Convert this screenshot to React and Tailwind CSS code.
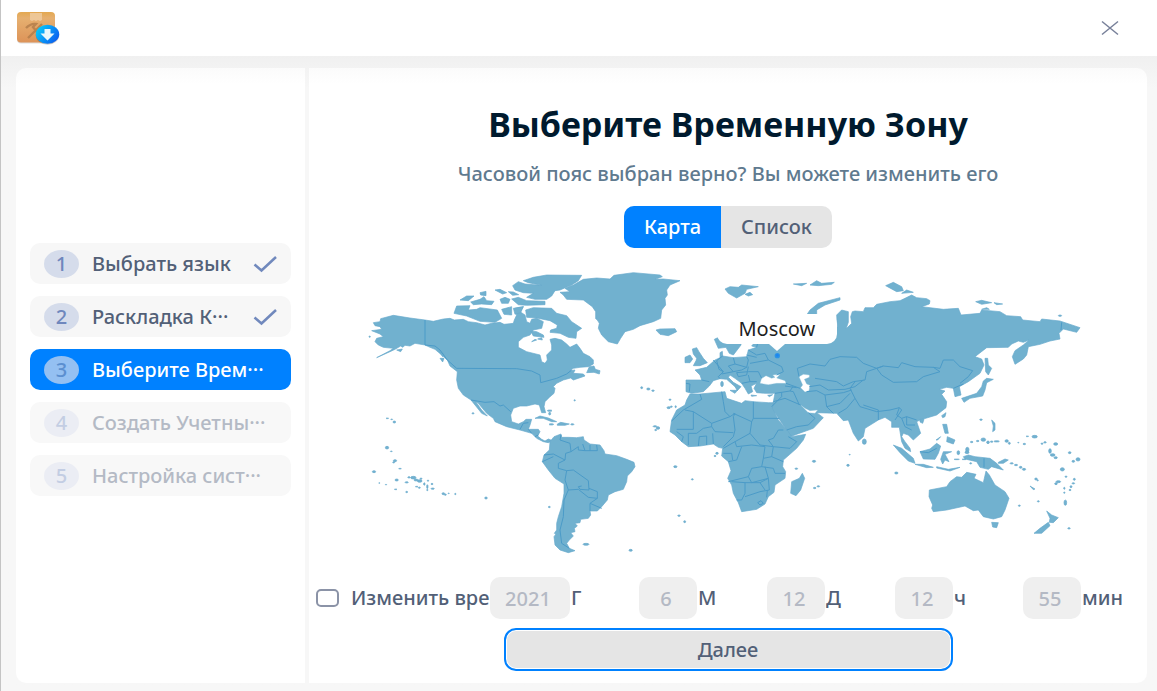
import React, { useState } from 'react';

const steps = [
  { id: 1, label: 'Выбрать язык', status: 'done' },
  { id: 2, label: 'Раскладка К···', status: 'done' },
  { id: 3, label: 'Выберите Врем···', status: 'active' },
  { id: 4, label: 'Создать Учетны···', status: 'pending' },
  { id: 5, label: 'Настройка сист···', status: 'pending' },
];

const dateFields = [
  { id: 'year', value: '2021', unit: 'Г', width: 'w-20' },
  { id: 'month', value: '6', unit: 'М', width: 'w-[58px]' },
  { id: 'day', value: '12', unit: 'Д', width: 'w-[58px]' },
  { id: 'hour', value: '12', unit: 'ч', width: 'w-[58px]' },
  { id: 'minute', value: '55', unit: 'мин', width: 'w-[58px]' },
];

// Small islands: [x, y, rx, ry]
const islands = [
  [82, 475, 4, 1], [95, 478, 3, 1], [103, 486, 4, 3], [81, 563, 5, 4], [94, 574, 3, 1], [105, 602, 5, 3], [101, 607, 3, 2],
  [120, 626, 4, 1], [42, 635, 5, 3], [58, 669, 2, 1], [78, 674, 2, 1], [110, 660, 5, 3], [107, 688, 4, 1], [140, 667, 5, 2],
  [140, 696, 3, 2], [147, 652, 4, 2], [160, 653, 8, 4], [168, 660, 6, 3], [179, 663, 7, 4], [183, 656, 3, 2], [170, 680, 4, 1],
  [178, 683, 3, 2], [193, 672, 2, 4], [202, 680, 2, 6], [204, 662, 2, 2], [216, 672, 3, 2], [218, 686, 5, 2], [202, 690, 2, 2],
  [250, 701, 4, 3], [256, 704, 3, 2], [266, 700, 2, 1], [286, 702, 2, 2], [378, 714, 4, 3], [568, 741, 3, 2],
  [678, 853, 9, 3], [812, 871, 5, 3], [644, 421, 2, 2], [845, 383, 3, 3], [865, 387, 5, 3], [879, 392, 4, 2],
  [885, 499, 6, 2], [894, 504, 5, 4], [887, 510, 3, 2], [930, 419, 3, 2], [926, 443, 5, 3], [934, 440, 3, 2], [947, 440, 2, 3],
  [946, 620, 5, 3], [997, 658, 3, 2], [957, 767, 4, 2], [974, 785, 3, 3], [1071, 580, 4, 3], [1065, 588, 3, 2],
  [1309, 626, 4, 2], [1362, 604, 5, 3], [1464, 616, 4, 3], [1469, 584, 2, 1], [1364, 684, 4, 2], [1375, 679, 4, 2],
  [1609, 639, 5, 3], [569, 452, 7, 2], [569, 461, 3, 4], [574, 493, 7, 2], [637, 493, 5, 2], [339, 460, 3, 2],
  [1863, 479, 4, 2], [1835, 546, 4, 2], [1853, 543, 4, 2], [1870, 539, 7, 5], [1884, 547, 4, 4], [1895, 545, 4, 2],
  [1910, 544, 8, 2], [1940, 543, 5, 4], [1948, 550, 3, 3], [1975, 548, 2, 1], [1993, 552, 4, 2], [2024, 530, 8, 4],
  [2002, 529, 4, 1], [2046, 551, 3, 2], [2055, 547, 4, 2], [2087, 552, 6, 4], [2129, 578, 4, 3], [2140, 604, 4, 3],
  [2154, 598, 6, 5], [2070, 573, 4, 7], [2078, 585, 7, 4], [2087, 593, 5, 3], [2107, 628, 6, 5], [2118, 650, 3, 2],
  [2095, 665, 7, 3], [2088, 671, 4, 3], [2143, 658, 3, 3], [2140, 670, 4, 2], [2133, 680, 3, 3], [2130, 690, 3, 2],
  [2113, 685, 2, 3], [2113, 698, 2, 2], [2116, 728, 4, 8], [2028, 657, 4, 3], [2033, 661, 2, 2], [1978, 737, 3, 2],
  [2035, 724, 3, 2], [2127, 805, 4, 2], [1955, 610, 5, 2], [1968, 615, 5, 2], [1982, 622, 4, 3], [1992, 628, 5, 3],
  [1795, 578, 4, 6], [1832, 610, 3, 2], [1822, 569, 5, 7], [1821, 577, 6, 4], [1790, 598, 8, 1], [1812, 598, 6, 1],
  [2100, 167, 5, 2], [29, 230, 2, 2], [1513, 545, 6, 8], [1086, 372, 4, 8],
];

function AppLogo() {
  return (
    <svg viewBox="0 0 44 35" className="h-[35px] w-11" aria-hidden="true">
      <defs>
        <linearGradient id="box" x1="0" y1="0" x2="0" y2="1">
          <stop offset="0" stopColor="#e3a850" />
          <stop offset="0.2" stopColor="#e6b070" />
          <stop offset="1" stopColor="#dd9358" />
        </linearGradient>
        <linearGradient id="badge" x1="0" y1="0" x2="1" y2="0.6">
          <stop offset="0.1" stopColor="#08cdfb" />
          <stop offset="1" stopColor="#0a62f0" />
        </linearGradient>
      </defs>
      <rect x="1" y="2" width="38" height="30.5" rx="4" fill="#00000022" />
      <rect x="1" y="1" width="38" height="30.5" rx="4" fill="url(#box)" />
      <path d="M14 2h12v7l-2 1-2-1-2 1-2-1-2 1-2-1Z" fill="#efcba0" opacity="0.85" />
      <path d="M10 17q5-5 10-4l-3 3 10 12M12 27l9-9 5-5" fill="none" stroke="#b07c4a" strokeWidth="2.4" opacity="0.8" />
      <ellipse cx="31.5" cy="24.3" rx="11.7" ry="9.5" fill="#00000030" />
      <ellipse cx="31.5" cy="23.3" rx="11.7" ry="9.5" fill="url(#badge)" />
      <path d="M28.5 18h6v4.500h4l-7 7-7-7h4Z" fill="#e9f7fb" />
    </svg>
  );
}

function WorldMap() {
  return (
    <svg viewBox="-6 0 2220 900" className="block h-auto w-full" aria-hidden="true">
      <g fill="#71b1cf" stroke="#66a9cc" strokeWidth="2" strokeLinejoin="round">
        {/* North and Central America */}
        <path d="M40 188 60 185 62 176 100 166 150 174 195 180 220 184 250 177 270 175 283 180 310 178 325 185 350 188 375 195 395 190 420 187 432 193 460 190 463 180 470 165 465 145 490 140 480 155 495 165 500 185 510 190 515 178 530 175 550 185 545 205 520 210 510 225 490 232 475 245 475 262 500 275 540 285 545 305 555 310 562 300 560 285 575 270 575 255 570 238 585 235 605 240 620 252 630 262 650 252 660 265 670 280 690 290 700 300 700 312 685 320 660 322 640 325 628 332 645 330 640 340 670 342 675 348 640 360 632 354 610 360 590 370 580 380 585 385 582 400 570 410 555 425 552 440 557 458 545 458 538 435 525 432 500 438 480 438 460 445 452 465 455 485 475 492 490 485 498 478 515 478 510 495 505 508 535 508 540 515 533 528 545 538 555 543 565 537 578 542 565 548 550 545 530 535 515 520 480 510 440 500 405 485 400 475 380 460 355 430 347 425 365 450 382 468 365 460 345 435 333 420 310 405 295 385 290 360 292 335 270 318 262 300 245 285 225 268 210 262 195 255 165 250 150 258 135 256 128 262 122 258 105 268 90 275 50 293 90 272 100 265 70 262 55 255 45 245 50 235 70 230 60 222 35 212 65 208 60 200 45 197Z" />
        {/* South America */}
        <path d="M570 545 582 530 603 522 605 532 625 532 650 533 670 530 672 540 690 552 720 555 732 572 735 582 770 587 800 598 822 607 825 620 815 635 802 648 800 665 790 688 765 695 745 705 742 720 725 740 712 753 690 753 692 765 685 775 662 778 660 788 645 790 652 798 643 805 645 815 632 818 640 828 628 840 620 850 628 865 645 872 625 878 600 870 585 855 582 830 588 822 583 820 590 810 590 790 595 770 605 740 612 700 612 672 585 655 565 630 547 605 552 585 568 570Z" />
        {/* Greenland */}
        <path d="M600 97 630 95 615 85 640 75 670 58 710 54 750 57 762 46 820 38 900 45 907 50 885 58 910 57 960 62 930 75 920 90 922 105 915 115 917 135 905 150 902 175 880 185 840 197 820 208 795 215 782 235 772 252 745 245 725 225 715 205 718 190 712 180 707 176 707 155 697 140 670 120 620 118 610 105Z" />
        {/* Arctic islands */}
        <path d="M490 62 520 52 560 45 665 46 655 62 635 75 600 90 585 92 575 108 560 118 525 118 500 112 520 100 490 98 465 90 458 77 475 65 495 72 545 76 505 68Z" />
        <path d="M497 150 520 143 575 145 590 160 620 167 635 185 665 205 650 215 648 235 625 232 600 220 570 217 572 210 590 205 592 195 570 182 530 174 500 172Z" />
        <path d="M290 138 330 137 325 150 350 148 360 143 412 150 425 175 405 187 360 184 320 168 282 160Z" />
        <path d="M300 120 320 108 342 108 325 122ZM332 126 360 118 372 110 380 122 402 124 395 134 365 132 340 134ZM360 98 378 94 378 107 362 105ZM405 90 420 88 440 98 428 102ZM445 95 460 96 476 104 458 106ZM420 118 435 112 450 118 445 130 425 130ZM455 117 475 112 500 122 555 124 555 134 500 136 475 134ZM425 148 455 140 455 165 432 163ZM460 145 490 140 482 158 465 163ZM512 213 530 215 550 225 552 232 520 228ZM533 237 545 233 547 240ZM110 270 127 267 122 275ZM238 275 252 283 248 290ZM240 295 252 295 248 306ZM515 245 525 238 530 240ZM680 338 688 320 702 318 706 328 720 332 718 342 702 337Z" />
        {/* Caribbean */}
        <path d="M525 475 540 468 565 474 590 485 575 485 550 475ZM592 492 602 487 628 492 615 496 592 496Z" />
        {/* Eurasia */}
        <path d="M978 360 1025 360 1020 345 1005 330 1040 322 1065 300 1080 293 1080 278 1087 274 1088 288 1120 293 1160 290 1165 270 1190 262 1175 258 1190 240 1300 200 1432 200 1430 165 1445 150 1465 155 1465 187 1458 207 1475 190 1472 170 1477 155 1485 153 1510 155 1515 143 1540 143 1550 133 1590 125 1620 122 1635 115 1655 105 1670 113 1700 116 1710 122 1708 132 1685 140 1750 148 1795 145 1803 165 1860 160 1865 150 1920 155 1940 167 1982 170 1988 180 2040 185 2045 177 2100 183 2160 203 2150 217 2110 207 2097 220 2100 237 2070 243 2040 253 2005 260 2000 285 1990 297 1965 313 1957 290 1965 272 1990 255 2007 240 1990 247 1975 243 1955 252 1945 262 1880 263 1845 290 1865 297 1872 315 1860 340 1825 365 1798 380 1803 405 1785 410 1780 385 1760 382 1737 388 1755 393 1745 403 1760 425 1758 443 1730 465 1680 480 1670 485 1682 520 1660 540 1645 525 1630 520 1625 530 1635 545 1650 565 1652 575 1635 565 1625 545 1618 502 1595 502 1595 485 1575 472 1555 480 1515 505 1510 530 1495 543 1480 520 1465 480 1450 482 1430 460 1370 458 1390 473 1360 505 1290 530 1280 510 1235 445 1240 425 1245 400 1215 400 1190 398 1182 385 1190 370 1173 378 1178 395 1165 402 1155 385 1145 370 1125 355 1110 345 1105 352 1120 367 1143 380 1132 392 1125 380 1100 358 1080 356 1060 362 1048 378 1030 395 995 400 978 395Z" />
        <path d="M1063 238 1090 225 1145 225 1143 255 1120 285 1108 280 1098 262 1075 265Z" />
        {/* Africa */}
        <path d="M990 402 1020 402 1095 395 1100 415 1145 430 1155 422 1180 425 1225 428 1240 428 1237 445 1255 480 1285 515 1295 530 1337 523 1330 540 1310 565 1270 600 1268 620 1277 635 1275 655 1245 675 1242 697 1225 710 1215 732 1190 748 1145 755 1135 728 1120 700 1115 675 1103 655 1113 632 1105 605 1085 588 1088 565 1075 562 1060 552 1020 558 985 560 965 545 945 525 930 515 935 480 950 450 975 435 980 420ZM1295 665 1318 655 1327 640 1334 655 1322 690 1308 707 1292 700Z" />
        {/* British Isles, Iceland, Svalbard */}
        <path d="M997 267 1010 263 1017 275 1030 295 1042 308 1020 317 1000 317 1008 302 1010 295 1000 282ZM975 292 990 285 998 297 990 308 975 308ZM888 210 900 207 945 206 950 215 925 227 900 223ZM1095 87 1110 80 1135 82 1145 75 1195 80 1160 88 1155 100 1130 114 1105 100ZM1155 103 1170 97 1178 104 1165 108ZM1180 166 1205 165 1205 170 1180 170Z" />
        {/* Russian Arctic islands */}
        <path d="M1340 165 1350 150 1375 130 1440 113 1440 120 1395 135 1370 150 1370 168ZM1300 72 1340 70 1325 77ZM1350 75 1370 62 1385 70 1423 67 1415 73 1375 77ZM1577 77 1600 67 1625 80 1630 92 1610 95ZM1625 100 1640 90 1660 97ZM1847 125 1865 121 1895 128 1865 133ZM1902 128 1928 132 1910 134ZM1865 148 1880 143 1888 148Z" />
        {/* Japan, Sakhalin, Taiwan */}
        <path d="M1875 295 1883 295 1885 315 1895 325 1885 345 1877 335ZM1880 355 1900 358 1880 368 1875 390 1868 408 1830 415 1812 427 1805 415 1850 400 1865 380 1870 363ZM1745 467 1758 458 1755 470 1748 473ZM1680 478 1692 478 1688 490 1680 486Z" />
        {/* South-east Asia */}
        <path d="M1600 555 1625 565 1660 595 1665 610 1645 603 1620 578ZM1665 613 1690 613 1720 622 1700 623ZM1680 575 1710 567 1730 550 1742 558 1735 580 1725 598 1690 597ZM1750 575 1775 575 1755 583 1767 605 1755 600 1748 612 1742 598ZM1748 493 1760 493 1765 520 1755 520ZM1762 530 1785 540 1780 552 1760 545ZM1730 620 1765 628 1800 622 1770 633 1730 624ZM1728 540 1742 530 1733 540ZM1810 590 1825 585 1845 590 1890 595 1910 610 1930 630 1895 620 1885 628 1860 622 1850 605 1815 597ZM1915 607 1935 597 1945 600 1930 610 1915 610ZM1895 480 1905 490 1905 510 1898 515 1900 498ZM2010 678 2025 687 2020 689Z" />
        {/* Australia and New Zealand */}
        <path d="M1708 690 1760 680 1770 665 1790 650 1805 652 1820 637 1848 643 1842 655 1870 668 1878 633 1888 645 1905 675 1935 695 1947 715 1935 750 1925 770 1900 777 1870 770 1855 750 1840 752 1815 738 1760 750 1720 755 1715 745 1718 735 1707 710ZM1895 787 1915 788 1910 803 1898 801ZM2060 753 2075 765 2095 773 2080 788 2068 787 2070 775ZM2065 787 2070 797 2045 820 2022 820 2040 805Z" />
        {/* Mediterranean islands */}
        <path d="M1110 391 1132 391 1125 400ZM1173 405 1190 407 1175 409ZM1223 406 1238 404 1228 410Z" />
        {islands.map(([cx, cy, rx, ry]) => (
          <ellipse key={`${cx}-${cy}`} cx={cx} cy={cy} rx={rx} ry={ry} />
        ))}
      </g>

      {/* Inland seas */}
      <g fill="#ffffff" stroke="#8fc3da" strokeWidth="1">
        <path d="M1200 370 1205 355 1218 347 1235 355 1245 352 1238 345 1260 343 1250 354 1275 362 1278 370 1250 370 1225 374Z" />
        <path d="M1317 350 1330 343 1348 345 1348 352 1333 358 1340 372 1350 376 1347 392 1335 396 1322 383 1328 375Z" />
        <path d="M1322 435 1335 445 1350 452 1373 450 1365 460 1345 458Z" />
      </g>

      {/* Country borders */}
      <g fill="none" stroke="#4b9bc8" strokeWidth="3" strokeLinejoin="round">
        <path d="M195 180V255L225 258 240 270 262 300 290 325 470 326 515 333 540 345 542 368 590 355 620 342 635 330M333 420 375 427 402 425 420 438 430 435 452 455M480 508 490 490 505 488M505 508 515 520M525 530 535 525" />
        <path d="M603 525 600 540 630 550 633 575 617 580 615 600 595 610 595 625 620 632 640 630 685 662 687 690 660 688 655 680 665 678M633 575 655 560 655 570 675 572 668 552M675 572 690 572 690 555M710 555 712 572 690 572M552 585 580 582 615 600M547 605 580 590M620 632 615 660 625 690 655 688 685 712 712 715 712 695 687 685M625 690 612 720 610 770 600 810 605 850 628 865M712 715 690 730 690 753M690 730 725 745" />
        <path d="M1088 288 1070 302 1077 328 1090 335 1075 350 1080 356M1120 293 1125 312 1105 318 1120 335 1085 342M1125 312 1160 322 1165 300 1160 290M1160 322 1145 330 1120 335M1165 320 1160 345 1135 350M1165 335 1195 335 1205 355M1165 345 1170 365 1190 365M1170 365 1145 370M1165 270 1190 285 1215 280 1225 300 1170 310M1190 262 1195 240M1225 300 1265 320 1270 335 1250 345M978 370 990 372 988 395M1025 360 1048 365M1090 335 1060 300M1160 285 1190 292M1135 350 1130 338 1165 335" />
        <path d="M1317 350 1312 325 1350 312 1395 318 1410 298 1440 290 1490 292 1510 310 1550 325 1570 318M1550 325 1520 335 1515 360 1480 365 1450 378 1430 365 1365 355M1348 380 1380 375 1405 390 1455 388 1485 380M1278 370 1320 385M1275 378 1310 383M1245 400 1290 393 1300 395 1318 435M1290 393 1300 378M1240 425 1275 415 1322 435M1235 440 1265 410 1265 397M1340 395 1370 392 1395 405 1400 440 1420 460M1395 405 1450 398 1475 390M1400 440 1440 430 1470 400M1435 460 1460 445 1485 415 1470 385 1485 365M1485 380 1510 360M1485 415 1500 440 1550 455 1590 450 1618 443 1625 450 1605 480M1510 435 1555 450 1555 480M1618 443 1610 465 1625 475 1640 470 1640 495 1665 495M1625 475 1635 500 1655 510M1640 470 1670 480M1280 510 1310 500 1345 495 1365 475 1345 458" />
        <path d="M1550 325 1570 318 1615 323 1625 308 1665 320 1720 322 1740 335 1690 350 1670 365 1600 367 1565 345 1550 325M1720 322 1740 325 1750 300 1780 300 1800 320 1838 332 1825 350 1800 370M1780 385 1810 372M2105 187 2103 210" />
        <path d="M935 483 970 450 1025 418 1020 402M975 450 1000 455 1055 490 1110 470 1125 460 1120 470M1000 455V508L950 508M1055 490 1055 500 1030 505 1010 520 985 520 985 555M1085 395 1090 425 1095 455 1110 470M1180 425V475H1258M1180 475 1175 485 1120 460M1120 470 1125 510 1120 530 1090 560M1055 500 1065 515 1120 518M1015 558 1018 530 1040 528 1040 555M1175 485 1170 520 1125 545 1090 565M1170 520 1200 555 1240 560 1225 540 1240 535 1255 510 1270 510M1125 545 1130 560 1175 555 1215 560 1210 595 1205 620 1175 625 1165 650 1105 665M1105 605 1130 600 1145 560M1090 580 1115 580 1118 600M1240 560 1290 565 1310 545 1285 530M1240 560 1235 590 1270 605M1210 595 1235 590M1205 620 1240 625 1245 640 1275 640M1165 650 1175 668 1225 655 1215 620M1115 665 1155 668 1155 700 1145 720 1130 720M1155 668 1200 668 1225 655 1228 690 1200 695 1155 710M1200 668 1215 690M1222 690 1220 712M1193 728 1203 722 1210 730 1200 735 1193 728M950 515 970 530 965 545M1060 552 1058 520" />
        <path d="M1680 575 1705 578 1730 565M1872 595V622" />
      </g>

      <circle cx="1252" cy="287" r="8" fill="#2b93e6" />
      <circle cx="1252" cy="286" r="4" fill="#1c86f2" />
    </svg>
  );
}

function StepItem({ step }) {
  const styles = {
    done: { row: 'bg-[#f7f7f7] text-[#526077]', badge: 'bg-[#d5dceb] text-[#6f87bd]' },
    active: { row: 'bg-[#0081ff] text-white', badge: 'bg-[#94c0f2] text-[#5b8fd0]' },
    pending: { row: 'bg-[#f8f8f8] text-[#b4bac5]', badge: 'bg-[#ebedf4] text-[#c3cde3]' },
  }[step.status];

  return (
    <li className={`flex h-[41px] items-center rounded-[10px] px-[14px] ${styles.row}`}>
      <span className={`flex h-7 w-[35px] shrink-0 items-center justify-center rounded-[50%] ${styles.badge}`}>
        {step.id}
      </span>
      <span className="ml-[13px] whitespace-nowrap">{step.label}</span>
      {step.status === 'done' && (
        <svg viewBox="0 0 24 18" className="ml-auto h-[18px] w-6 shrink-0" fill="none" stroke="#7189bd" strokeWidth="2.5">
          <path d="M1.500 9.500 8.500 15.500 23 2" />
        </svg>
      )}
    </li>
  );
}

export default function App() {
  const [view, setView] = useState('map');
  const [manual, setManual] = useState(false);

  return (
    <div className="flex min-h-screen flex-col border-l border-[#c4c4c4] bg-[#f7f7f7] font-['Noto_Sans',sans-serif] text-xl leading-6 font-medium text-[#526077]">
      <header className="flex h-14 shrink-0 items-center justify-between bg-white pr-[38px] pl-[15px]">
        <AppLogo />
        <button type="button" aria-label="Закрыть" className="p-0">
          <svg viewBox="0 0 18 16" className="h-4 w-[18px]" fill="none" stroke="#78819a" strokeWidth="1.500">
            <path d="M1 1.500 17 14.500M17 1.500 1 14.500" />
          </svg>
        </button>
      </header>

      <div className="flex flex-1 gap-1 bg-linear-to-b from-[#f0f0f0] to-[#f7f7f7] to-[32px] pt-3 pr-2.5 pb-2 pl-[15px]">
        <aside className="flex w-[289px] shrink-0 flex-col justify-center rounded-l-[10px] bg-linear-to-b from-[#fbfbfb] to-white to-[16px] px-[14px] pb-3">
          <ol className="flex flex-col gap-3">
            {steps.map((step) => (
              <StepItem key={step.id} step={step} />
            ))}
          </ol>
        </aside>

        <main className="flex min-w-0 flex-1 flex-col items-center rounded-r-[10px] bg-linear-to-b from-[#fbfbfb] to-white to-[16px] pt-9">
          <h1 className="text-[34px] leading-10 font-bold text-[#001a2e]">Выберите Временную Зону</h1>
          <p className="mt-[18px] text-[#5f7a8f]">Часовой пояс выбран верно? Вы можете изменить его</p>

          <div className="mt-5 flex h-[42px] overflow-hidden rounded-[10px] bg-[#e5e5e5]">
            <button
              type="button"
              onClick={() => setView('map')}
              className={`w-[97px] ${view === 'map' ? 'bg-[#0081ff] text-white' : ''}`}
            >
              Карта
            </button>
            <button
              type="button"
              onClick={() => setView('list')}
              className={`w-[111px] ${view === 'list' ? 'bg-[#0081ff] text-white' : ''}`}
            >
              Список
            </button>
          </div>

          <div className="relative mt-3 w-full max-w-[740px]">
            <WorldMap />
            <div className="absolute bottom-[72%] left-[56.6%] flex h-[30px] w-[120px] -translate-x-1/2 items-center justify-center rounded-[10px] bg-white font-normal text-[#1f1f1f]">
              Moscow
              <svg viewBox="0 0 16 7" className="absolute top-full left-1/2 h-[7px] w-4 -translate-x-1/2" aria-hidden="true">
                <path d="M0 0h16L8 7Z" fill="#ffffff" />
              </svg>
            </div>
          </div>

          <div className="mt-[17px] grid w-full grid-cols-[174fr_149fr_128fr_128fr_128fr_117fr] items-center pr-[7px] pl-[7px]">
            <label className="flex min-w-0 items-center gap-3 overflow-hidden whitespace-nowrap">
              <input
                type="checkbox"
                checked={manual}
                onChange={(e) => setManual(e.target.checked)}
                className="h-[18px] w-[23px] shrink-0 appearance-none rounded-[5px] border-2 border-[#8b93a7] bg-white checked:bg-[#0081ff]"
              />
              Изменить вре
            </label>
            {dateFields.map((field) => (
              <div key={field.id} className="flex min-w-0 items-center gap-px">
                <input
                  id={field.id}
                  type="text"
                  defaultValue={field.value}
                  disabled={!manual}
                  className={`h-[42px] shrink-0 rounded-[10px] bg-[#efefef] pr-1 text-center disabled:text-[#b4b9c4] ${field.width}`}
                />
                <label htmlFor={field.id}>{field.unit}</label>
              </div>
            ))}
          </div>

          <button
            type="button"
            className="mt-[9px] mb-3 h-[43px] w-full max-w-[449px] rounded-[12px] border-2 border-[#0081ff] bg-[#e5e5e5] shadow-[inset_0_0_0_1px_white]"
          >
            Далее
          </button>
        </main>
      </div>
    </div>
  );
}
